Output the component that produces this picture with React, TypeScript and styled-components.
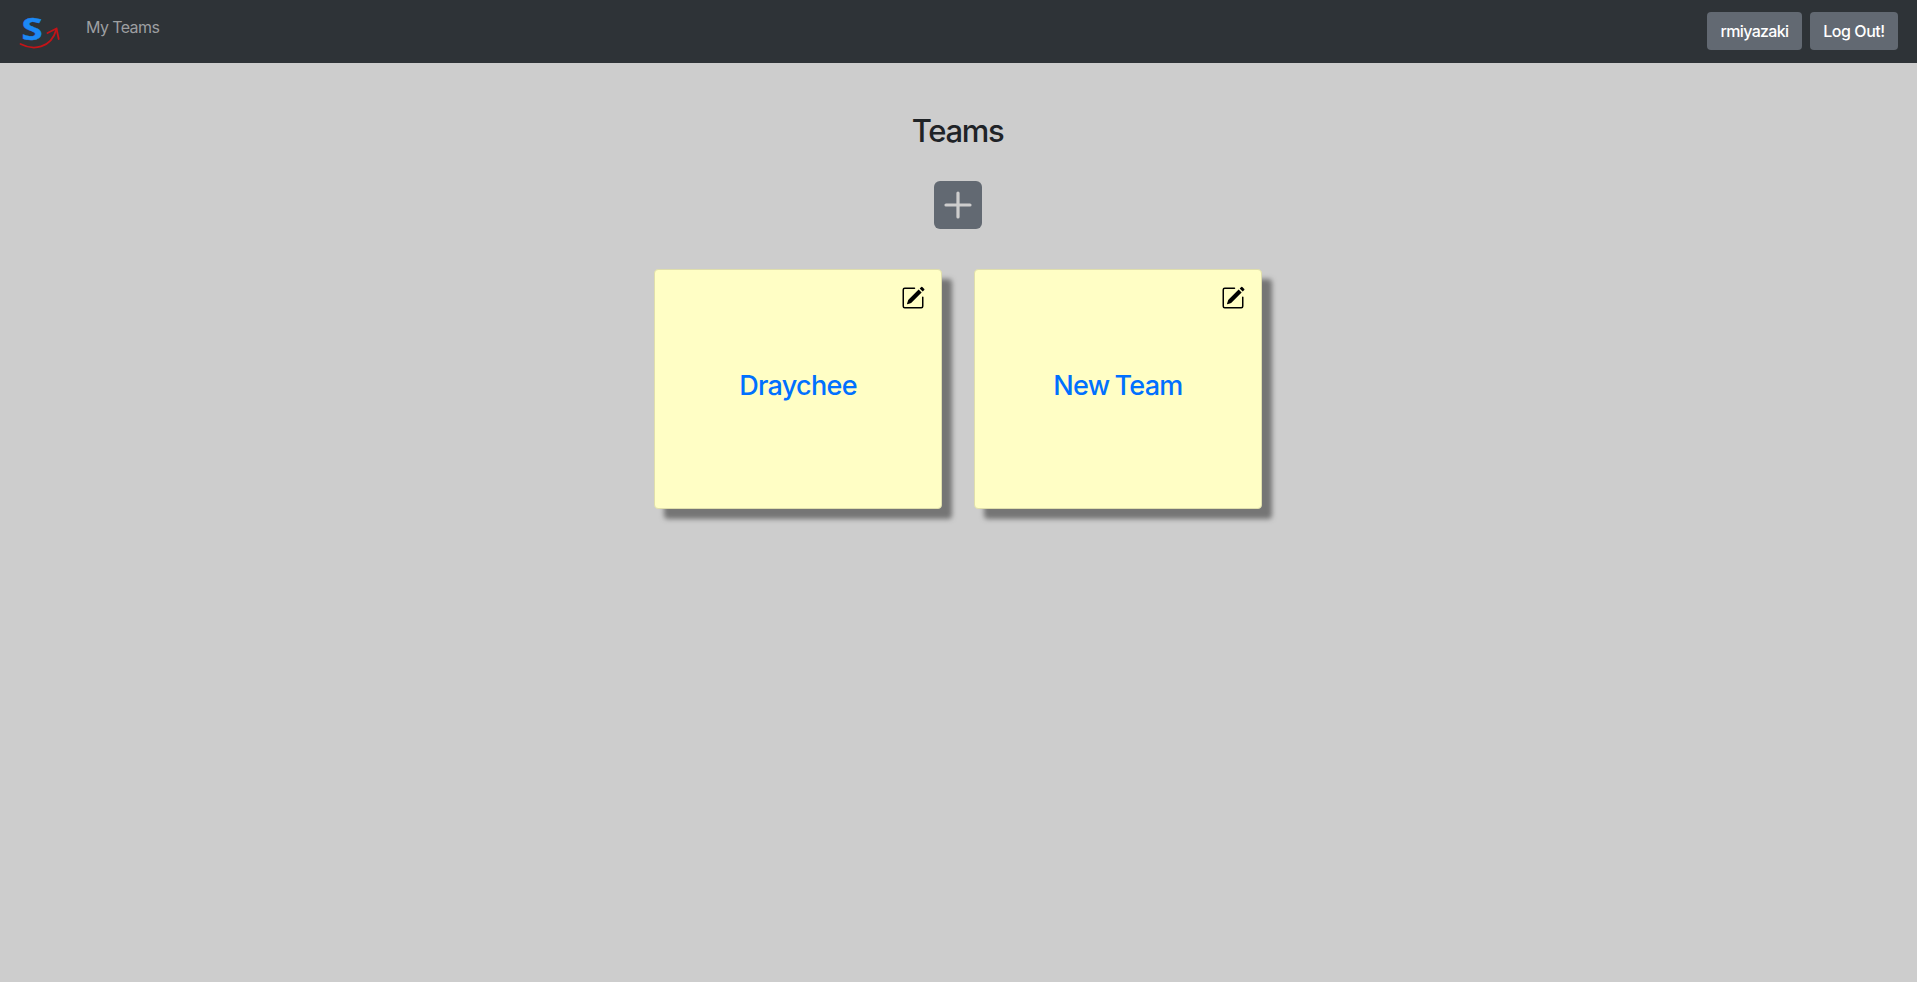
import React from "react";
import styled, { createGlobalStyle } from "styled-components";
import { BsPencilSquare } from "react-icons/bs";

const GlobalStyle = createGlobalStyle`
  *, *::before, *::after { box-sizing: border-box; }
  body {
    margin: 0;
    min-height: 100vh;
    background: #cdcdcd;
    color: #1f2327;
    font-family: Inter, "Liberation Sans", sans-serif;
    font-size: 16px;
    line-height: 1.5;
  }
`;

const Navbar = styled.nav`
  display: flex;
  align-items: center;
  height: 63px;
  padding: 0 19px 1px 18px;
  background: #2e3337;
`;

const Brand = styled.a`
  display: flex;
  width: 68px;
  height: 56px;
`;

const NavLink = styled.a`
  align-self: flex-start;
  margin-top: 15px;
  color: #9d9fa1;
  letter-spacing: -0.6px;
  text-decoration: none;
`;

const NavActions = styled.div`
  display: flex;
  gap: 8px;
  margin-left: auto;
`;

const NavButton = styled.button<{ $width: number; $tracking: number }>`
  width: ${({ $width }) => $width}px;
  height: 38px;
  padding: 0;
  border: 0;
  border-radius: 4px;
  background: #626972;
  color: #fff;
  font: inherit;
  font-weight: 500;
  letter-spacing: ${({ $tracking }) => $tracking}px;
`;

const Main = styled.main`
  display: flex;
  flex-direction: column;
  align-items: center;
  padding: 49px 1px 0 0;
`;

const Title = styled.h2`
  margin: 0;
  padding-right: 1px;
  font-size: 31px;
  font-weight: 500;
  line-height: 38px;
  letter-spacing: -1.3px;
`;

const AddButton = styled.button`
  display: grid;
  place-items: center;
  width: 48px;
  height: 48px;
  margin: 31px 0 40px;
  padding: 0;
  border: 0;
  border-radius: 6px;
  background: #626972;
`;

const Cards = styled.div`
  display: flex;
  gap: 32px;
`;

const Card = styled.article`
  display: flex;
  flex-direction: column;
  align-items: center;
  width: 288px;
  height: 240px;
  padding: 16px;
  border: 1px solid #dfdeac;
  border-radius: 4px;
  background: #fffec5;
  box-shadow: 10px 10px 5px #757575;
`;

const EditButton = styled.button`
  display: flex;
  align-self: flex-end;
  padding: 0;
  border: 0;
  background: none;
  color: #000;
`;

const TeamName = styled.a`
  margin-top: 59px;
  color: #0070ff;
  font-size: 27px;
  font-weight: 500;
  line-height: 34px;
  letter-spacing: -0.7px;
  word-spacing: -1.5px;
  text-decoration: none;
`;

const teams = ["Draychee", "New Team"];

function Logo() {
  return (
    <svg width="44" height="56" viewBox="0 -8 44 56" aria-label="S">
      <text x="3.4" y="28.6" fill="#1c89f5" stroke="#1c89f5" strokeWidth="0.4" fontFamily="Open Sans" fontWeight="700" fontSize="31" textLength="21.2" lengthAdjust="spacingAndGlyphs">S</text>
      <g fill="none" stroke="#c31418" strokeWidth="1.8" strokeLinecap="round">
        <path d="M2.5 33C15 39.5 33 38 38.5 18" />
        <path d="M29.5 22L38.5 17.5L40.7 28" />
      </g>
    </svg>
  );
}

export default function App() {
  return (
    <>
      <GlobalStyle />
      <Navbar>
        <Brand><Logo /></Brand>
        <NavLink>My Teams</NavLink>
        <NavActions>
          <NavButton $width={95} $tracking={-0.65}>rmiyazaki</NavButton>
          <NavButton $width={88} $tracking={-0.45}>Log Out!</NavButton>
        </NavActions>
      </Navbar>
      <Main>
        <Title>Teams</Title>
        <AddButton aria-label="Add team">
          <svg width="28" height="28" viewBox="0 0 28 28" stroke="#cdcdcd" strokeWidth="3.2" strokeLinecap="round">
            <path d="M14 2v24M2 14h24" />
          </svg>
        </AddButton>
        <Cards>
          {teams.map((team) => (
            <Card key={team}>
              <EditButton aria-label="Edit team"><BsPencilSquare size={24} /></EditButton>
              <TeamName>{team}</TeamName>
            </Card>
          ))}
        </Cards>
      </Main>
    </>
  );
}
